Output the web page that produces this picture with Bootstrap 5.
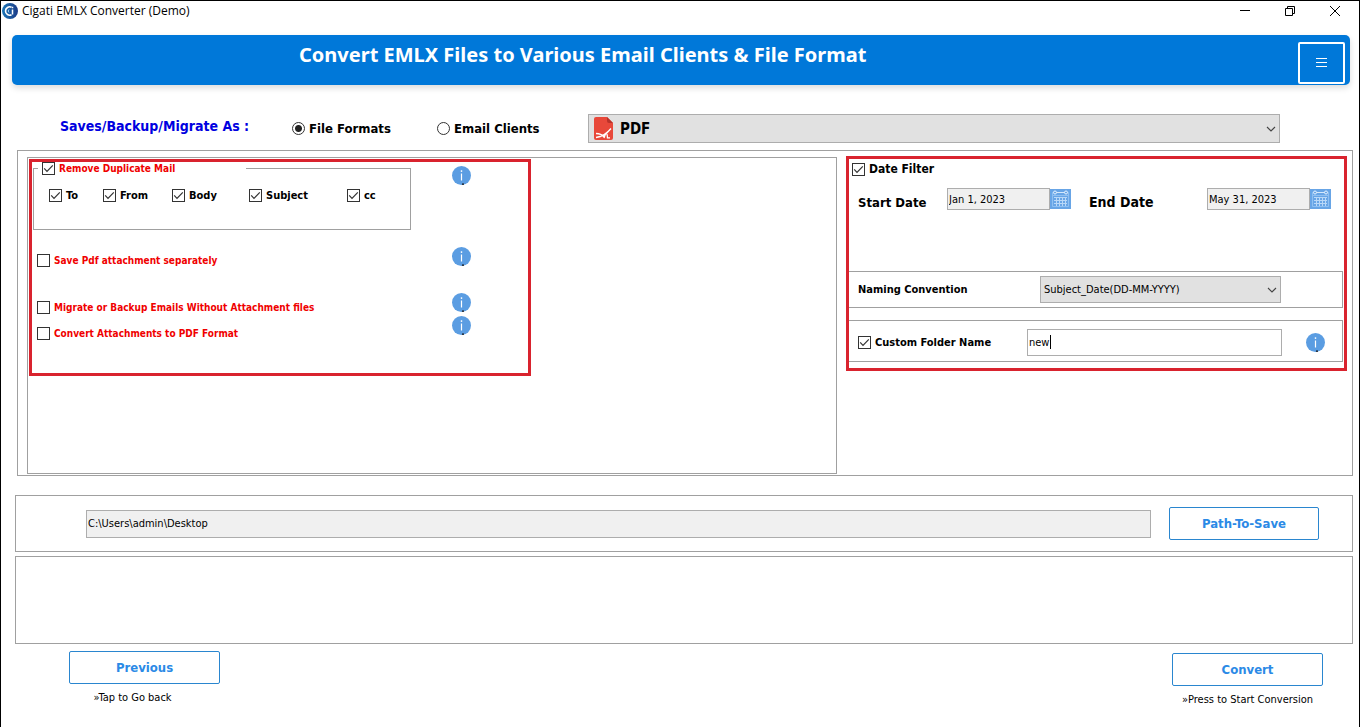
<!DOCTYPE html>
<html lang="en">
<head>
<meta charset="utf-8">
<meta name="viewport" content="width=device-width, initial-scale=1">
<title>Cigati EMLX Converter (Demo)</title>
<link href="https://cdn.jsdelivr.net/npm/bootstrap@5.3.0/dist/css/bootstrap.min.css" rel="stylesheet">
<style>
  :root { --line: #a0a0a0; --accent: #0078d9; --mark-red: #d9232e; }
  body { font-family: "DejaVu Sans Condensed", "DejaVu Sans", sans-serif; font-size: 11px; line-height: 13px; color: #000; background: #fff; }
  .app-window { border: 1px solid #000; border-bottom: 0; }
  .title-bar { height: 20px; padding: 0 2px 0 1px; font: 12px/22px "Open Sans", sans-serif; }
  .title-bar button { width: 45px; height: 20px; padding: 0; border: 0; background: none; display: flex; align-items: center; justify-content: center; }
  .banner { height: 50px; margin: 14px 9px 0 11px; padding: 0 5px 0 0; background: var(--accent); border-radius: 5px; box-shadow: 0 3px 6px rgba(0,0,0,.14); }
  .banner h1 { font: bold 20px/40px "Noto Sans", sans-serif; color: #fff; padding-left: 287px; }
  .menu-btn { width: 47px; height: 42px; margin-top: 7px; padding: 0; border: 2px solid #fff; border-radius: 2px; background: none; }
  .format-row { display: grid; grid-template-columns: 232px 145px 151px 1fr; margin-top: 29px; padding: 0 79px 0 59px; height: 29px; font-weight: bold; font-size: 13px; line-height: 18px; }
  .format-row .caption { color: #0000e0; font-size: 14px; line-height: 24px; }
  .tick { display: flex; align-items: center; gap: 4px; font-weight: bold; }
  .tick input { appearance: none; flex: none; width: 13px; height: 13px; margin: 0; border: 1px solid #333; background: #fff center/11px no-repeat; }
  .tick input[type=checkbox]:checked { background-image: url("data:image/svg+xml,%3Csvg xmlns='http://www.w3.org/2000/svg' viewBox='0 0 11 11'%3E%3Cpath d='M1.2 5.4 4 8.3 9.8 2.4' fill='none' stroke='%23333' stroke-width='1.2'/%3E%3C/svg%3E"); }
  .tick input[type=radio] { border-radius: 50%; }
  .tick input[type=radio]:checked { background-image: radial-gradient(circle, #222 3px, transparent 4px); }
  .combo { border: 1px solid #adadad; border-radius: 0; color: #000; background-color: #e1e1e1; background-size: 10px 10px; background-position: right 3px center; background-image: url("data:image/svg+xml,%3Csvg xmlns='http://www.w3.org/2000/svg' viewBox='0 0 10 10'%3E%3Cpath d='m1 3 4 4 4-4' fill='none' stroke='%23444' stroke-width='1.1'/%3E%3C/svg%3E"); }
  .format-combo { height: 29px; padding: 0 20px 0 31px; font-size: 15px; font-weight: bold; line-height: 28px; }
  .pdf-mark { position: absolute; left: 6px; top: 3px; }
  .pane { border: 1px solid var(--line); }
  .options { display: grid; grid-template-columns: 810fr 501fr; gap: 9px; align-items: start; margin: 7px 6px 0 16px; padding: 6px 5px 1px 9px; }
  .options > .left { min-height: 317px; padding: 1px; }
  .options > .right { margin-top: -1px; }
  .framed { border: 3px solid var(--mark-red); }
  .left .framed { max-width: 502px; min-height: 217px; display: grid; grid-template-columns: 420px 1fr; }
  .red-text { color: #f00000; font-size: 10px; }
  .dup { width: 378px; height: 68px; margin: 0 0 24px 1px; border: 1px solid var(--line); }
  .dup legend { float: none; width: 208px; margin: 0 0 14px 4px; padding: 0 4px; font-size: 10px; line-height: 13px; }
  .dup .fields { display: grid; grid-template-columns: 54px 69px 77px 98px 1fr; padding-left: 15px; }
  .extras { padding-left: 5px; }
  .extras .tick + .tick { margin-top: 13px; }
  .extras .tick + .tick.spaced { margin-top: 34px; }
  .infos { display: flex; flex-direction: column; gap: 4px; }
  .infos .gap-l { margin-top: 58px; }
  .infos .gap-m { margin-top: 23px; }
  .date-filter { padding: 4px 0 0 3px; font-size: 12px; }
  .date-row { display: grid; grid-template-columns: 89px 142px 118px 1fr; padding: 12px 0 0 9px; min-height: 95px; align-items: start; }
  .date-row label { font-weight: bold; font-size: 13px; line-height: 30px; }
  .date-row label.end { font-size: 14px; line-height: 28px; }
  .box { min-width: 0; padding: 0 1px; border: 1px solid #adadad; border-radius: 0; background: #f0f0f0; color: #000; font-size: 11px; line-height: 13px; }
  .box:focus { outline: none; }
  .date-box { width: 103px; height: 22px; }
  .cal { width: 21px; height: 21px; padding: 0; border: 0; background: none; }
  .cal svg, .menu-btn svg { display: block; margin: auto; }
  .setting { border-left: 0; margin-right: 1px; padding-left: 9px; display: grid; align-items: center; }
  .naming { grid-template-columns: 182px 241px 1fr; height: 37px; font-weight: bold; }
  .naming .combo { height: 27px; padding: 0 16px 0 3px; font-size: 11px; line-height: 24px; }
  .folder { grid-template-columns: 169px 255px 1fr; height: 42px; margin-top: 12px; margin-bottom: 6px; padding-top: 2px; }
  .folder .box { width: 100%; height: 27px; background: #fff; }
  .text-caret { position: absolute; left: 23px; top: 6px; width: 1px; height: 14px; background: #000; }
  .path-pane { display: flex; align-items: center; gap: 18px; height: 57px; margin: 19px 6px 0 14px; padding: 0 33px 0 70px; }
  .path-pane .box { flex: 1; height: 28px; }
  .action { width: 151px; height: 33px; padding: 0; border: 1px solid #2a86cf; border-radius: 2px; background: #fff; color: #2b8ae6; font-weight: bold; font-size: 13px; line-height: 18px; }
  .path-pane .action { width: 150px; }
  .log-pane { height: 88px; margin: 4px 6px 0 14px; }
  .foot { padding: 7px 36px 12px 68px; }
  .foot .next { padding-top: 2px; }
  .foot p { margin: 7px 0 0; text-align: center; }
</style>
</head>
<body>
<svg class="d-none" aria-hidden="true">
  <symbol id="info" viewBox="0 0 19 19"><circle cx="9.5" cy="9.5" r="9.5" fill="#5b9de2"/><path d="M9.5 7.5v7" stroke="#fff" stroke-width="1.2"/><path d="M9.5 4.3v1.6" stroke="#fff" stroke-width="1.4"/><path d="M10 17.5h2v1.3h-2z" fill="#111"/></symbol>
  <symbol id="calendar" viewBox="0 0 21 20"><path d="M0 0h21v20H0z" fill="#68a5e6"/><path d="M2.5 3.5h16v14h-16zM2.5 6.5h16" fill="none" stroke="#8fc0f2"/><path d="M5 3.5h11" stroke="#d6e9fc"/><g fill="#68a5e6" stroke="#e6f2ff"><circle cx="5" cy="3.5" r="1.5"/><circle cx="16" cy="3.5" r="1.5"/></g><path d="M4 8.5h13M4 11.5h13M4 14.5h13M6.5 8v9M9.5 8v9M12.5 8v9M15.5 8v9" stroke="#b9d8f8" fill="none"/></symbol>
</svg>
<div class="app-window min-vh-100">
  <header class="title-bar d-flex align-items-center">
    <svg width="16" height="16" viewBox="0 0 16 16" aria-hidden="true"><defs><linearGradient id="g"><stop stop-color="#1c77b8"/><stop offset="1" stop-color="#1b3a86"/></linearGradient></defs><circle cx="8" cy="8" r="8" fill="url(#g)"/><path d="M9.500 4.200A4.200 4.200 0 1 0 9.500 11.800" fill="none" stroke="#fff" stroke-width="1.600"/><path d="M10.500 6.500v5M10.500 3.800v1.500" stroke="#fff" stroke-width="1.500"/><path d="M7 6.500a2 2 0 0 0 0 3" fill="none" stroke="#9ed2f5"/></svg>
    <span class="flex-grow-1 ps-1">Cigati EMLX Converter (Demo)</span>
    <button aria-label="Minimize"><svg width="10" height="10"><path d="M0 4.5h10" stroke="#000"/></svg></button>
    <button aria-label="Restore"><svg width="10" height="10"><path d="M.5 2.5h7v7h-7zM2.5 2.5v-2h7v7h-2" fill="none" stroke="#000"/></svg></button>
    <button aria-label="Close"><svg width="10" height="10"><path d="m0 0 10 10m0-10-10 10" stroke="#000"/></svg></button>
  </header>

  <div class="banner d-flex justify-content-between align-items-start">
    <h1 class="m-0">Convert EMLX Files to Various Email Clients &amp; File Format</h1>
    <button class="menu-btn" aria-label="Menu"><svg width="11" height="10"><path d="M0 .5h11M0 4.5h11M0 8.5h11" stroke="#fff"/></svg></button>
  </div>

  <main>
    <div class="format-row">
      <span class="caption">Saves/Backup/Migrate As :</span>
      <label class="tick"><input type="radio" name="target" checked>File Formats</label>
      <label class="tick"><input type="radio" name="target">Email Clients</label>
      <div class="position-relative">
        <select class="form-select combo format-combo" aria-label="File format"><option>PDF</option></select>
        <svg class="pdf-mark" width="19" height="23" viewBox="0 0 19 23" aria-hidden="true"><path d="M2 0h11l6 6v15a2 2 0 0 1-2 2H2a2 2 0 0 1-2-2V2a2 2 0 0 1 2-2z" fill="#e8483a"/><path d="M13 0v4a2 2 0 0 0 2 2h4z" fill="#b8322a"/><path d="M2 16.500c3 0 6 1 8 3.500M2 20.500c7-1 11-4 15-9M12.500 16c1 1.500 1 3 1 5.500M13 20.800h3M11.500 17l-1.500 4" fill="none" stroke="#fff" stroke-width="1.300"/></svg>
      </div>
    </div>

    <section class="options pane">
      <div class="left pane">
        <div class="framed">
          <div>
            <fieldset class="dup">
              <legend><label class="tick red-text"><input type="checkbox" checked>Remove Duplicate Mail</label></legend>
              <div class="fields">
                <label class="tick"><input type="checkbox" checked>To</label>
                <label class="tick"><input type="checkbox" checked>From</label>
                <label class="tick"><input type="checkbox" checked>Body</label>
                <label class="tick"><input type="checkbox" checked>Subject</label>
                <label class="tick"><input type="checkbox" checked>cc</label>
              </div>
            </fieldset>
            <div class="extras">
              <label class="tick red-text"><input type="checkbox">Save Pdf attachment separately</label>
              <label class="tick red-text spaced"><input type="checkbox">Migrate or Backup Emails Without Attachment files</label>
              <label class="tick red-text"><input type="checkbox">Convert Attachments to PDF Format</label>
            </div>
          </div>
          <div class="infos pt-1">
            <svg width="19" height="19"><use href="#info"/></svg>
            <svg width="19" height="19" class="gap-l"><use href="#info"/></svg>
            <svg width="19" height="19" class="gap-m"><use href="#info"/></svg>
            <svg width="19" height="19"><use href="#info"/></svg>
          </div>
        </div>
      </div>

      <div class="right framed">
        <label class="tick date-filter"><input type="checkbox" checked>Date Filter</label>
        <div class="date-row">
          <label for="start">Start Date</label>
          <div class="d-flex"><input id="start" class="box date-box" value="Jan 1, 2023"><button class="cal" aria-label="Pick start date"><svg width="21" height="20"><use href="#calendar"/></svg></button></div>
          <label for="end" class="end">End Date</label>
          <div class="d-flex"><input id="end" class="box date-box" value="May 31, 2023"><button class="cal" aria-label="Pick end date"><svg width="21" height="20"><use href="#calendar"/></svg></button></div>
        </div>
        <div class="setting naming pane">
          <label for="naming">Naming Convention</label>
          <select id="naming" class="form-select combo"><option>Subject_Date(DD-MM-YYYY)</option></select>
        </div>
        <div class="setting folder pane">
          <label class="tick"><input type="checkbox" checked>Custom Folder Name</label>
          <div class="position-relative"><input class="box" value="new" aria-label="Folder name"><span class="text-caret"></span></div>
          <svg width="19" height="19" class="ms-4"><use href="#info"/></svg>
        </div>
      </div>
    </section>

    <section class="path-pane pane">
      <input class="box" value="C:\Users\admin\Desktop" readonly aria-label="Destination path">
      <button class="action">Path-To-Save</button>
    </section>
    <section class="log-pane pane"></section>
  </main>

  <footer class="foot d-flex justify-content-between">
    <div><button class="action">Previous</button><p class="pe-4">»Tap to Go back</p></div>
    <div class="next"><button class="action">Convert</button><p>»Press to Start Conversion</p></div>
  </footer>
</div>
<script src="https://cdn.jsdelivr.net/npm/bootstrap@5.3.0/dist/js/bootstrap.bundle.min.js"></script>
</body>
</html>
